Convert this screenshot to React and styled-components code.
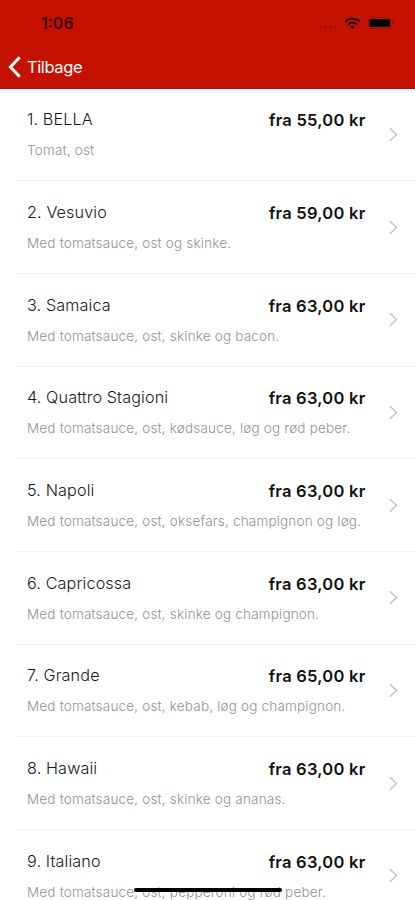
import React from 'react';
import styled, { createGlobalStyle } from 'styled-components';

const pizzas = [
  { name: '1. BELLA', price: '55,00', toppings: 'Tomat, ost' },
  { name: '2. Vesuvio', price: '59,00', toppings: 'Med tomatsauce, ost og skinke.' },
  { name: '3. Samaica', price: '63,00', toppings: 'Med tomatsauce, ost, skinke og bacon.' },
  { name: '4. Quattro Stagioni', price: '63,00', toppings: 'Med tomatsauce, ost, kødsauce, løg og rød peber.' },
  { name: '5. Napoli', price: '63,00', toppings: 'Med tomatsauce, ost, oksefars, champignon og løg.' },
  { name: '6. Capricossa', price: '63,00', toppings: 'Med tomatsauce, ost, skinke og champignon.' },
  { name: '7. Grande', price: '65,00', toppings: 'Med tomatsauce, ost, kebab, løg og champignon.' },
  { name: '8. Hawaii', price: '63,00', toppings: 'Med tomatsauce, ost, skinke og ananas.' },
  { name: '9. Italiano', price: '63,00', toppings: 'Med tomatsauce, ost, pepperoni og rød peber.' },
];

const WifiIcon = () => (
  <svg width='17' height='13' viewBox='0 0 17 13' fill='none' stroke='#1c0000' strokeWidth='2'>
    <path d='M1.2 4.7a10.4 10.4 0 0 1 14.6 0' />
    <path d='M4 7.6a6.4 6.4 0 0 1 9 0' />
    <path d='M8.5 12 6.4 9.8a3 3 0 0 1 4.2 0z' fill='#1c0000' stroke='none' />
  </svg>
);

const BatteryIcon = () => (
  <svg width='27' height='12' viewBox='0 0 27 12'>
    <rect x='0.5' y='0.5' width='22.5' height='11' rx='2.5' fill='none' stroke='#a50f00' />
    <rect x='1.5' y='2' width='20.5' height='8' rx='0.8' fill='#000' />
    <path d='M24 3.8q2.4 2.2 0 4.4z' fill='#8c0c00' />
  </svg>
);

export default function App() {
  return (
    <Screen>
      <GlobalStyle />
      <Header>
        <StatusBar>
          <Time>1:06</Time>
          <StatusIcons>
            <Signal><Dot /><Dot /><Dot /><Dot /></Signal>
            <WifiIcon />
            <BatteryIcon />
          </StatusIcons>
        </StatusBar>
        <BackButton>
          <svg width='13' height='22' viewBox='0 0 13 22' fill='none' stroke='#fff' strokeWidth='3'>
            <path d='M11.7 1.3 2.4 11l9.3 9.7' />
          </svg>
          Tilbage
        </BackButton>
      </Header>
      <List>
        {pizzas.map((pizza) => (
          <Row key={pizza.name}>
            <Content>
              <TopLine>
                <Name>{pizza.name}</Name>
                <Price>fra {pizza.price} kr</Price>
              </TopLine>
              <Toppings>{pizza.toppings}</Toppings>
            </Content>
            <Chevron width='9' height='15' viewBox='0 0 9 15'>
              <path d='M1 1.2 7.5 7.5 1 13.8' fill='none' stroke='#c6c6c6' strokeWidth='1.6' />
            </Chevron>
          </Row>
        ))}
      </List>
      <HomeIndicator />
    </Screen>
  );
}

const GlobalStyle = createGlobalStyle`
  body {
    margin: 0;
    overflow: hidden;
    background-color: #fff;
    font-family: Inter, 'Liberation Sans', sans-serif;
  }
`;

const Screen = styled.div`
  position: relative;
  width: 415px;
  height: 900px;
  overflow: hidden;
`;

const Header = styled.header`
  box-sizing: border-box;
  height: 88.6px;
  background-color: #c51200;
`;

const StatusBar = styled.div`
  box-sizing: border-box;
  height: 46px;
  display: flex;
  justify-content: space-between;
  align-items: center;
  padding: 0 20px 0 41px;
`;

const Time = styled.div`
  color: #3a0300;
  font-size: 16px;
  font-weight: 600;
`;

const StatusIcons = styled.div`
  display: flex;
  align-items: center;
  gap: 7px;
`;

const Signal = styled.div`
  display: flex;
  gap: 2px;
  padding-top: 8px;
`;

const Dot = styled.span`
  width: 3px;
  height: 2px;
  background-color: #a60e00;
`;

const BackButton = styled.div`
  display: flex;
  align-items: center;
  gap: 6px;
  height: 41px;
  padding-left: 8px;
  color: #fff;
  font-size: 16.5px;
  letter-spacing: -0.4px;
`;

const List = styled.div`
  display: flex;
  flex-direction: column;
`;

const Row = styled.div`
  box-sizing: border-box;
  height: 92.7px;
  flex-shrink: 0;
  display: flex;
  align-items: center;
  margin-left: 16px;
  padding: 0 17px 0 11px;
  border-bottom: 1px solid #f0f0f0;
`;

const Content = styled.div`
  width: 338.5px;
`;

const TopLine = styled.div`
  display: flex;
  justify-content: space-between;
  line-height: 22px;
`;

const Name = styled.div`
  margin-top: -0.5px;
  color: #181818;
  font-size: 16.2px;
  font-weight: 300;
  letter-spacing: 0.12px;
`;

const Price = styled.div`
  padding-top: 0.5px;
  color: #111;
  font-size: 16.5px;
  font-weight: 600;
  letter-spacing: 0.25px;
`;

const Toppings = styled.div`
  margin-top: 9px;
  color: #929292;
  font-size: 13.5px;
  font-weight: 300;
  letter-spacing: 0.19px;
  line-height: 20px;
  white-space: nowrap;
`;

const Chevron = styled.svg`
  margin-left: auto;
`;

const HomeIndicator = styled.div`
  position: absolute;
  left: 134px;
  top: 888px;
  width: 148px;
  height: 4px;
  border-radius: 2px;
  background-color: #000;
`;
